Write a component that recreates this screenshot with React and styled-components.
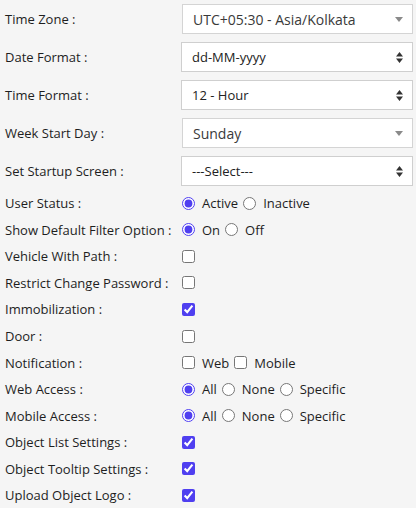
import React from 'react';
import styled, { createGlobalStyle } from 'styled-components';

const GlobalStyle = createGlobalStyle`
  html, body {
    margin: 0;
    padding: 0;
    background: #f5f5f5;
  }
  body {
    font-family: "Open Sans", "Liberation Sans", sans-serif;
    font-size: 13px;
    color: #1e1e1e;
  }
`;

const Form = styled.div`
  display: flex;
  flex-direction: column;
  padding: 0 3px 0 5px;
`;

const Row = styled.div`
  display: grid;
  grid-template-columns: ${props => (props.select ? '176px' : '177px')} 1fr;
  align-items: center;
  height: ${props => (props.select ? '38px' : '26.55px')};
`;

const Label = styled.div`
  white-space: nowrap;
`;

const SelectBox = styled.div`
  display: flex;
  align-items: center;
  justify-content: space-between;
  height: 30px;
  box-sizing: border-box;
  margin-left: ${props => (props.chosen ? '1px' : '0')};
  padding: 0 9px 0 10px;
  background: #fff;
  border: 1px solid ${props => (props.chosen ? '#d4d4d4' : '#cfcfcf')};
  color: ${props => (props.chosen ? '#3a3a3a' : '#222')};
  font-size: ${props => (props.chosen ? '14px' : '13px')};
`;

const Options = styled.div`
  display: flex;
  align-items: center;
  gap: 5px;
`;

const Option = styled.label`
  display: flex;
  align-items: center;
  gap: 7px;
`;

const Radio = styled.input.attrs({ type: 'radio' })`
  margin: 0;
  width: 13px;
  height: 13px;
  accent-color: #4f3ff0;
`;

const Check = styled.input.attrs({ type: 'checkbox' })`
  margin: 0;
  width: 13px;
  height: 13px;
  accent-color: #4f3ff0;
`;

const ArrowDown = () => (
  <svg width="8" height="5" viewBox="0 0 8 5">
    <path d="M0 0h8L4 5z" fill="#8a8a8a" />
  </svg>
);

const ArrowUpDown = () => (
  <svg width="7" height="11" viewBox="0 0 7 11">
    <path d="M0 4.5h7L3.5 0z M0 6.5h7L3.5 11z" fill="#333" />
  </svg>
);

const SelectField = ({ label, value, chosen }) => (
  <Row select>
    <Label>{label}</Label>
    <SelectBox chosen={chosen}>
      <span>{value}</span>
      {chosen ? <ArrowDown /> : <ArrowUpDown />}
    </SelectBox>
  </Row>
);

const RadioField = ({ label, name, options }) => (
  <Row>
    <Label>{label}</Label>
    <Options>
      {options.map((o, i) => (
        <Option key={o}>
          <Radio name={name} defaultChecked={i === 0} />
          {o}
        </Option>
      ))}
    </Options>
  </Row>
);

const CheckField = ({ label, options, checked }) => (
  <Row>
    <Label>{label}</Label>
    <Options>
      {options ? (
        options.map(o => (
          <Option key={o}>
            <Check />
            {o}
          </Option>
        ))
      ) : (
        <Check defaultChecked={checked} />
      )}
    </Options>
  </Row>
);

const App = () => {
  return (
    <>
      <GlobalStyle />
      <Form>
        <SelectField label="Time Zone :" value="UTC+05:30 - Asia/Kolkata" chosen />
        <SelectField label="Date Format :" value="dd-MM-yyyy" />
        <SelectField label="Time Format :" value="12 - Hour" />
        <SelectField label="Week Start Day :" value="Sunday" chosen />
        <SelectField label="Set Startup Screen :" value="---Select---" />
        <RadioField label="User Status :" name="status" options={['Active', 'Inactive']} />
        <RadioField label="Show Default Filter Option :" name="filter" options={['On', 'Off']} />
        <CheckField label="Vehicle With Path :" />
        <CheckField label="Restrict Change Password :" />
        <CheckField label="Immobilization :" checked />
        <CheckField label="Door :" />
        <CheckField label="Notification :" options={['Web', 'Mobile']} />
        <RadioField label="Web Access :" name="web" options={['All', 'None', 'Specific']} />
        <RadioField label="Mobile Access :" name="mobile" options={['All', 'None', 'Specific']} />
        <CheckField label="Object List Settings :" checked />
        <CheckField label="Object Tooltip Settings :" checked />
        <CheckField label="Upload Object Logo :" checked />
      </Form>
    </>
  );
};

export default App;
